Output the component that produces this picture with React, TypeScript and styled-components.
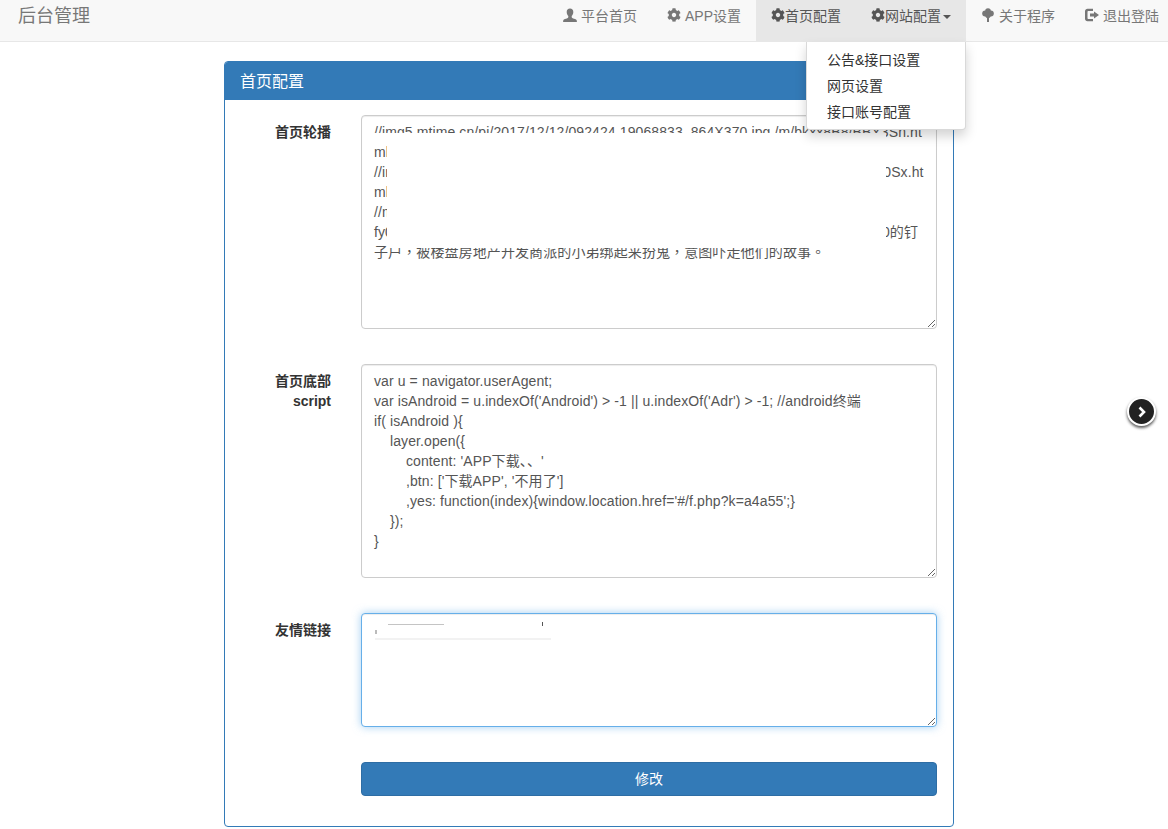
import React from "react";
import styled, { createGlobalStyle } from "styled-components";
import { FaCog } from "react-icons/fa";

const Global = createGlobalStyle`
  html, body { margin: 0; padding: 0; background: #fff; overflow: hidden; }
  body { font-family: "Liberation Sans", "Noto Sans CJK SC", sans-serif; font-size: 14px; line-height: 20px; color: #333; }
  * { box-sizing: border-box; }
`;

const Page = styled.div`
  width: 1168px;
  height: 829px;
  position: relative;
  overflow: hidden;
`;

const Navbar = styled.nav`
  height: 42px;
  background: #f8f8f8;
  border-bottom: 1px solid #e7e7e7;
  display: flex;
  justify-content: space-between;
  padding-left: 18px;
`;

const Brand = styled.div`
  font-size: 18px;
  color: #777;
  line-height: 20px;
  padding-top: 6px;
`;

const NavList = styled.ul`
  list-style: none;
  margin: 0 -6px 0 0;
  padding: 0;
  display: flex;
  flex: none;
`;

const NavItem = styled.li<{ $active?: boolean }>`
  position: relative;
  height: 41px;
  padding: 6px 15px 0;
  color: ${(p) => (p.$active ? "#555" : "#777")};
  background: ${(p) => (p.$active ? "#e7e7e7" : "transparent")};
  display: flex;
  align-items: flex-start;
  white-space: nowrap;
`;

const IconSlot = styled.span<{ $gap?: boolean }>`
  width: 14px;
  height: 14px;
  margin: 2px ${(p) => (p.$gap ? "4px" : "0")} 0 0;
  display: inline-flex;
  flex: none;
  svg { width: 14px; height: 14px; fill: currentColor; display: block; }
`;

const Caret = styled.span`
  width: 0;
  height: 0;
  margin: 9px 0 0 2px;
  border-top: 4px solid #555;
  border-left: 4px solid transparent;
  border-right: 4px solid transparent;
`;

const Menu = styled.ul`
  list-style: none;
  position: absolute;
  top: 42px;
  right: 0;
  width: 160px;
  height: 88px;
  margin: 0;
  padding: 5px 0;
  background: #fff;
  border: 1px solid rgba(0, 0, 0, 0.15);
  border-top: 0;
  border-radius: 0 0 4px 4px;
  box-shadow: 0 6px 12px rgba(0, 0, 0, 0.175);
  z-index: 10;
`;

const MenuItem = styled.li`
  padding: 3px 20px;
  color: #333;
  height: 26px;
`;

const Panel = styled.section`
  width: 730px;
  height: 766px;
  margin: 19px 0 0 224px;
  border: 1px solid #337ab7;
  border-radius: 4px;
  background: #fff;
`;

const PanelHeading = styled.h3`
  margin: 0;
  height: 38px;
  padding: 10px 15px 8px;
  background: #337ab7;
  color: #fff;
  font-size: 16px;
  font-weight: 400;
  line-height: 20px;
  border-radius: 3px 3px 0 0;
`;

const Form = styled.form`
  display: grid;
  grid-template-columns: 91px 576px;
  column-gap: 30px;
  row-gap: 35px;
  padding: 15px 16px 0 15px;
`;

const Label = styled.label`
  font-weight: 700;
  text-align: right;
  padding-top: 7px;
  color: #333;
`;

const Field = styled.div`
  position: relative;
`;

const Area = styled.textarea<{ $h: number; $focus?: boolean; $cjk?: string }>`
  display: block;
  width: 576px;
  height: ${(p) => p.$h}px;
  padding: 6px 12px;
  font: 14px/20px "Liberation Sans", "${(p) => p.$cjk || "Noto Sans CJK SC"}", sans-serif;
  letter-spacing: 0.1px;
  color: #555;
  background: #fff;
  border: 1px solid ${(p) => (p.$focus ? "#66afe9" : "#ccc")};
  border-radius: 4px;
  box-shadow: ${(p) =>
    p.$focus
      ? "inset 0 1px 1px rgba(0,0,0,.075), 0 0 8px rgba(102,175,233,.6)"
      : "inset 0 1px 1px rgba(0,0,0,.075)"};
  outline: none;
  overflow: hidden;
  white-space: pre;
`;

const Mask = styled.div<{ $x: number; $y: number; $w: number; $h: number }>`
  position: absolute;
  left: ${(p) => p.$x}px;
  top: ${(p) => p.$y}px;
  width: ${(p) => p.$w}px;
  height: ${(p) => p.$h}px;
  background: #fff;
`;

const Smudge = styled.div<{ $x: number; $y: number; $w: number; $h: number; $c: string }>`
  position: absolute;
  left: ${(p) => p.$x}px;
  top: ${(p) => p.$y}px;
  width: ${(p) => p.$w}px;
  height: ${(p) => p.$h}px;
  background: ${(p) => p.$c};
  filter: blur(0.6px);
`;

const Submit = styled.button`
  grid-column: 2;
  height: 34px;
  width: 576px;
  background: #337ab7;
  border: 1px solid #2e6da4;
  border-radius: 4px;
  color: #fff;
  font: 14px/20px "Liberation Sans", "Noto Sans CJK SC", sans-serif;
  padding: 6px 12px;
`;

const Blank = styled.div``;

const SideToggle = styled.div`
  position: absolute;
  left: 1127px;
  top: 397px;
  width: 29px;
  height: 29px;
  border-radius: 50%;
  background: #222;
  border: 2px solid #fff;
  box-shadow: 0 2px 3px rgba(0, 0, 0, 0.65);
  display: flex;
  align-items: center;
  justify-content: center;
  svg { width: 12px; height: 12px; }
`;

const UserIcon = () => (
  <svg viewBox="0 0 14 14"><path d="M7 .5c2.100 0 3.300 1.500 3.300 3.500 0 1.600-.7 3.100-1.600 3.900v1.200c0 .5.3.8 1 1.100 1.700.6 3.400 1 3.900 1.800.2.500.3 1.300.3 2H.1c0-.7.1-1.500.3-2 .5-.8 2.200-1.200 3.900-1.800.7-.3 1-.6 1-1.100V7.900C4.400 7.100 3.700 5.600 3.700 4 3.700 2 4.900.5 7 .5z" /></svg>
);
const TreeIcon = () => (
  <svg viewBox="0 0 14 14">
    <circle cx="7" cy="3" r="2.800" />
    <circle cx="4.200" cy="5.500" r="3" />
    <circle cx="9.800" cy="5.500" r="3" />
    <circle cx="7" cy="7.300" r="2.800" />
    <path d="M6 8h2v6H6z" />
  </svg>
);
const LogoutIcon = () => (
  <svg viewBox="0 0 14 14"><path d="M2.500.8H8V3H3.500C2.900 3 2.500 3.400 2.500 4V10c0 .6.4 1 1 1H8v2.200H2.500C1.100 13.200 0 12.100 0 10.700V3.300C0 1.900 1.100.8 2.500.8zM9 3.500L14 7 9 10.500V8.500H5V5.500H9z" /></svg>
);

const bannerText = [
  "//img5.mtime.cn/pi/2017/12/12/092424.19068833_864X370.jpg /m/bkxx8B8/BBY3Sn.ht",
  "ml",
  "//img5.mtime.cn/pi/2017/12/12/092424.19068833_864X370.jpg /m/bkrxxxxx/BBO0Sx.ht",
  "ml",
  "//mg5.mtime.cn",
  "fy" + "0".repeat(64) + "的钉",
  "子户，被楼盘房地产开发商派的小弟绑起来扮鬼，意图吓走他们的故事。",
].join("\n");

const scriptText = `var u = navigator.userAgent;
var isAndroid = u.indexOf('Android') > -1 || u.indexOf('Adr') > -1; //android终端
if( isAndroid ){
    layer.open({
        content: 'APP下载、、'
        ,btn: ['下载APP', '不用了']
        ,yes: function(index){window.location.href='#/f.php?k=a4a55';}
    });
}`;

export default function App() {
  return (
    <Page>
      <Global />
      <Navbar>
        <Brand>后台管理</Brand>
        <NavList>
          <NavItem><IconSlot $gap><UserIcon /></IconSlot>平台首页</NavItem>
          <NavItem><IconSlot $gap><FaCog /></IconSlot>APP设置</NavItem>
          <NavItem $active><IconSlot><FaCog /></IconSlot>首页配置</NavItem>
          <NavItem $active>
            <IconSlot><FaCog /></IconSlot>网站配置<Caret />
            <Menu>
              <MenuItem>公告&amp;接口设置</MenuItem>
              <MenuItem>网页设置</MenuItem>
              <MenuItem>接口账号配置</MenuItem>
            </Menu>
          </NavItem>
          <NavItem><IconSlot $gap><TreeIcon /></IconSlot>关于程序</NavItem>
          <NavItem><IconSlot $gap><LogoutIcon /></IconSlot>退出登陆</NavItem>
        </NavList>
      </Navbar>
      <Panel>
        <PanelHeading>首页配置</PanelHeading>
        <Form>
          <Label>首页轮播</Label>
          <Field>
            <Area $h={214} $cjk="Noto Sans CJK TC" readOnly value={bannerText} />
            <Mask $x={10} $y={18} $w={515} $h={10} />
            <Mask $x={26} $y={28} $w={499} $h={105} />
          </Field>
          <Label>首页底部<br />script</Label>
          <Field>
            <Area $h={214} readOnly value={scriptText} />
          </Field>
          <Label>友情链接</Label>
          <Field>
            <Area $h={114} $focus readOnly value="" />
            <Smudge $x={27} $y={11} $w={56} $h={1} $c="#c4c4c4" />
            <Smudge $x={181} $y={9} $w={1} $h={4} $c="#555" />
            <Smudge $x={14} $y={17} $w={2} $h={4} $c="#bbb" />
            <Smudge $x={14} $y={25} $w={176} $h={2} $c="#f2f2f2" />
          </Field>
          <Blank />
          <Submit type="button">修改</Submit>
        </Form>
      </Panel>
      <SideToggle>
        <svg viewBox="0 0 12 12"><path d="M3.500 1.500L8 6 3.500 10.500" fill="none" stroke="#fff" strokeWidth="2.600" /></svg>
      </SideToggle>
    </Page>
  );
}
